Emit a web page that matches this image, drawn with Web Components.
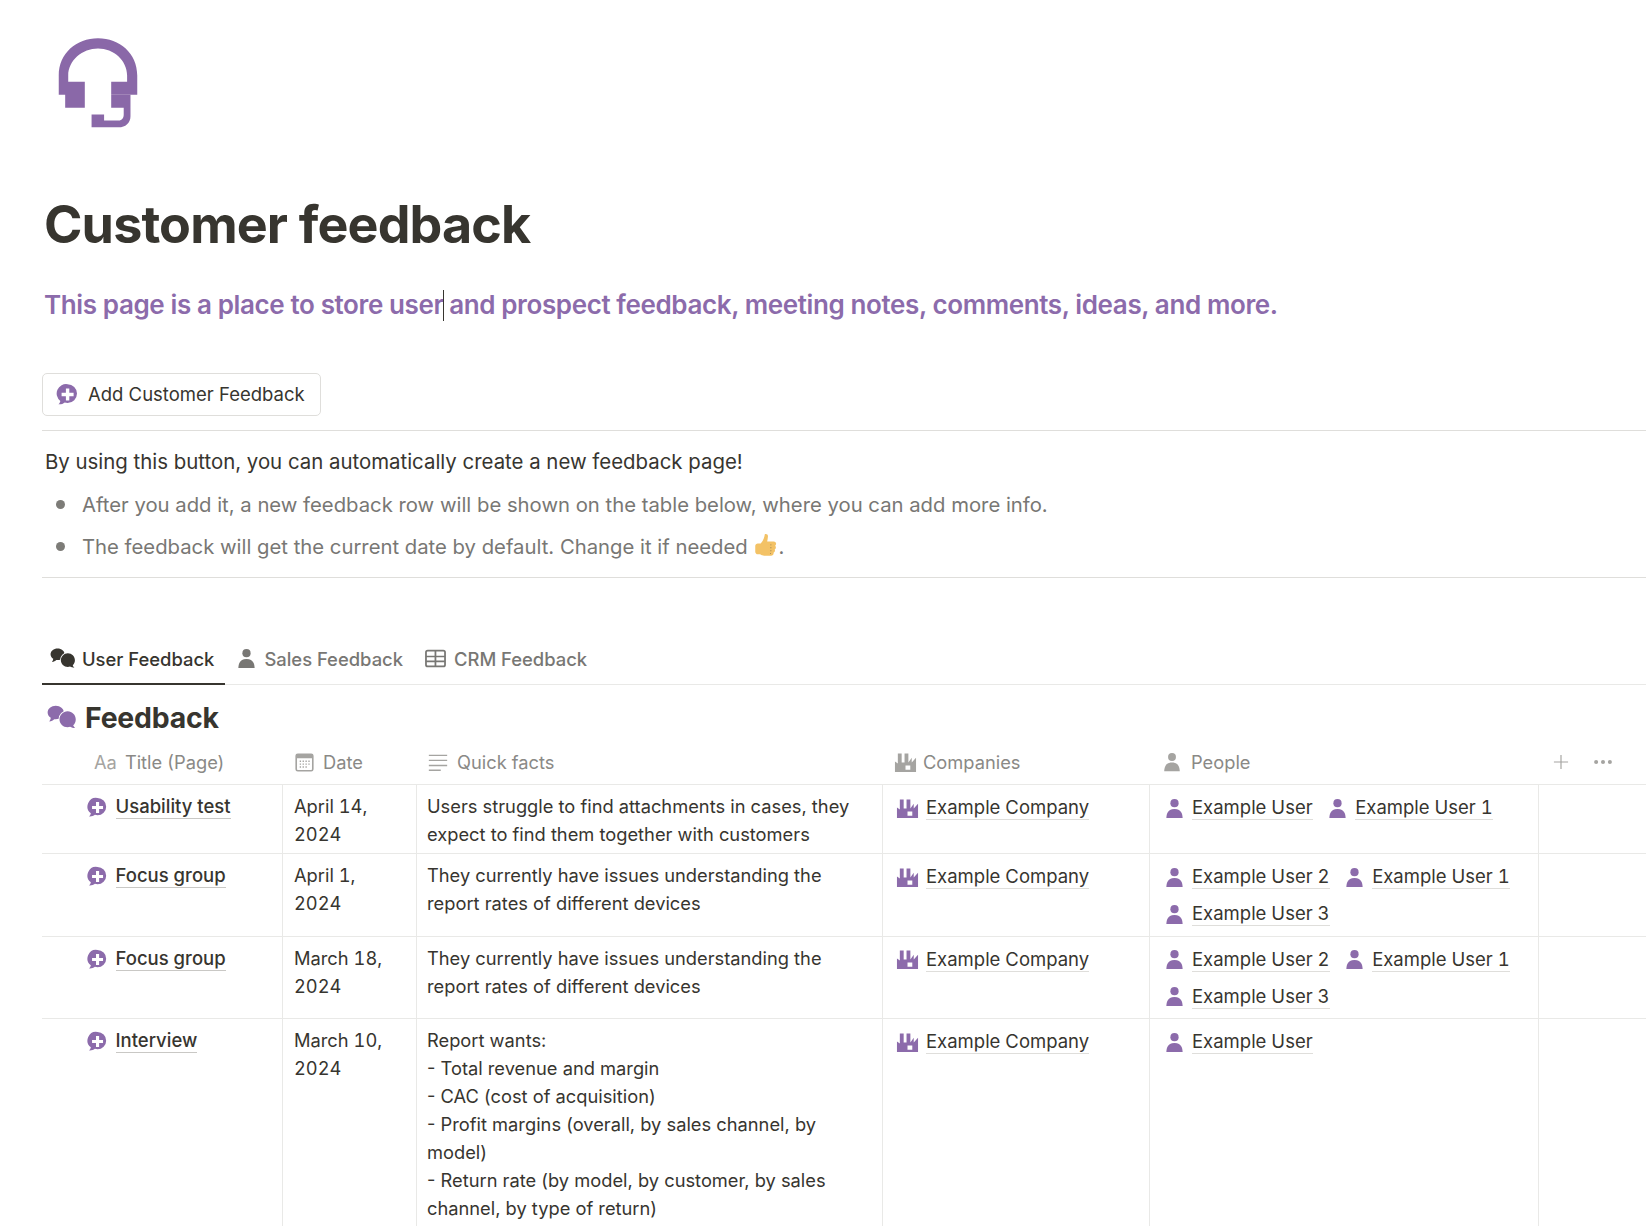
<!DOCTYPE html>
<html>
<head>
<meta charset="utf-8">
<title>Customer feedback</title>
<style>
    html, body { margin: 0; height: 100%; overflow: hidden; background: #fff; }
    body { font-family: 'Inter', 'Liberation Sans', sans-serif; color: #37352f; }
</style>
</head>
<body>
<fb-page>
    <fb-header slot="header">
        <span slot="title">Customer feedback</span>
        <span slot="lead">This page is a place to store user<fb-caret></fb-caret> and prospect feedback, meeting notes, comments, ideas, and more.</span>
    </fb-header>
    <fb-button slot="button" icon="chat-plus">Add Customer Feedback</fb-button>
    <fb-callout slot="callout">
        <span slot="intro">By using this button, you can automatically create a new feedback page!</span>
        <fb-bullet>After you add it, a new feedback row will be shown on the table below, where you can add more info.</fb-bullet>
        <fb-bullet>The feedback will get the current date by default. Change it if needed <fb-icon name="thumb" size="27" style="vertical-align:-5px;margin-right:-2px"></fb-icon>.</fb-bullet>
    </fb-callout>
    <fb-tabs slot="tabs">
        <fb-tab icon="chats" active>User Feedback</fb-tab>
        <fb-tab icon="person">Sales Feedback</fb-tab>
        <fb-tab icon="table">CRM Feedback</fb-tab>
    </fb-tabs>
    <fb-table slot="table" heading="Feedback">
        <fb-row head>
            <fb-th icon="aa" pad="52" gap="7">Title (Page)</fb-th>
            <fb-th icon="calendar" pad="10" gap="7">Date</fb-th>
            <fb-th icon="lines" pad="10" gap="8">Quick facts</fb-th>
            <fb-th icon="factory" pad="11" gap="6">Companies</fb-th>
            <fb-th icon="person" pad="11" gap="8">People</fb-th>
            <fb-th-actions></fb-th-actions>
        </fb-row>
        <fb-row>
            <fb-cell kind="title"><fb-link icon="chat-plus" title-link>Usability test</fb-link></fb-cell>
            <fb-cell kind="date">April 14, 2024</fb-cell>
            <fb-cell kind="text">Users struggle to find attachments in cases, they expect to find them together with customers</fb-cell>
            <fb-cell kind="rel"><fb-link icon="factory">Example Company</fb-link></fb-cell>
            <fb-cell kind="rel"><fb-link icon="person">Example User</fb-link><fb-link icon="person">Example User 1</fb-link></fb-cell>
            <fb-cell kind="blank"></fb-cell>
        </fb-row>
        <fb-row>
            <fb-cell kind="title"><fb-link icon="chat-plus" title-link>Focus group</fb-link></fb-cell>
            <fb-cell kind="date">April 1, 2024</fb-cell>
            <fb-cell kind="text">They currently have issues understanding the report rates of different devices</fb-cell>
            <fb-cell kind="rel"><fb-link icon="factory">Example Company</fb-link></fb-cell>
            <fb-cell kind="rel"><fb-link icon="person">Example User 2</fb-link><fb-link icon="person">Example User 1</fb-link><fb-link icon="person">Example User 3</fb-link></fb-cell>
            <fb-cell kind="blank"></fb-cell>
        </fb-row>
        <fb-row>
            <fb-cell kind="title"><fb-link icon="chat-plus" title-link>Focus group</fb-link></fb-cell>
            <fb-cell kind="date">March 18, 2024</fb-cell>
            <fb-cell kind="text">They currently have issues understanding the report rates of different devices</fb-cell>
            <fb-cell kind="rel"><fb-link icon="factory">Example Company</fb-link></fb-cell>
            <fb-cell kind="rel"><fb-link icon="person">Example User 2</fb-link><fb-link icon="person">Example User 1</fb-link><fb-link icon="person">Example User 3</fb-link></fb-cell>
            <fb-cell kind="blank"></fb-cell>
        </fb-row>
        <fb-row>
            <fb-cell kind="title"><fb-link icon="chat-plus" title-link>Interview</fb-link></fb-cell>
            <fb-cell kind="date">March 10, 2024</fb-cell>
            <fb-cell kind="text">Report wants:<br>- Total revenue and margin<br>- CAC (cost of acquisition)<br>- Profit margins (overall, by sales channel, by model)<br>- Return rate (by model, by customer, by sales channel, by type of return)</fb-cell>
            <fb-cell kind="rel"><fb-link icon="factory">Example Company</fb-link></fb-cell>
            <fb-cell kind="rel"><fb-link icon="person">Example User</fb-link></fb-cell>
            <fb-cell kind="blank"></fb-cell>
        </fb-row>
    </fb-table>
</fb-page>

<script>
// icon paths, all drawn on a 24 box except the headset
const ICONS = {
    'chat-plus': `<path fill-rule="evenodd" d="M12.600 2.200a9.400 9.400 0 0 1 0 18.800c-1 0-2-.2-2.900-.5-1.600 1.400-3.800 2-6.300 1.800 1.100-1 1.700-2.100 1.900-3.400A9.400 9.400 0 0 1 12.600 2.200zM10.900 6.500v4.300H6.600v3.400h4.300v4.300h3.400v-4.300h4.300v-3.400h-4.300V6.500z"/>`,
    'chats': `<path d="M7 2.200c3.600 0 6.500 2.400 6.500 5.400 0 3-2.900 5.400-6.500 5.400-.4 0-.8 0-1.200-.1-.9 1-2.200 1.700-4 1.800.7-.8 1.100-1.700 1.200-2.900C1.400 10.800.5 9.300.5 7.600c0-3 2.900-5.400 6.500-5.400z"/><path stroke="#fff" stroke-width="1.600" paint-order="stroke" d="M16.500 6.600c3.600 0 6.500 2.900 6.500 6.500 0 1.900-.8 3.500-2 4.700.2.700.6 1.400 1.500 2.200-1.500 0-2.900-.3-4-1-.6.200-1.300.3-2 .3-3.600 0-6.500-2.800-6.500-6.200s2.900-6.500 6.500-6.500z"/>`,
    'person': `<circle cx="12" cy="6.500" r="4.300"/><path d="M12 12.600c-3.900 0-6.100 1.500-7.300 3.900-.7 1.400-1.100 3.300-1.200 5.500h17c-.1-2.200-.5-4.100-1.200-5.500-1.200-2.400-3.400-3.900-7.300-3.900z"/>`,
    'table': `<path fill-rule="evenodd" d="M4.500 3.500h15A2.500 2.500 0 0 1 22 6v12a2.500 2.500 0 0 1-2.500 2.500h-15A2.500 2.500 0 0 1 2 18V6a2.500 2.500 0 0 1 2.500-2.500zM3.700 9.300h7.400V5.200H4.500a.8.800 0 0 0-.8.800zm9.100 0h7.500V6a.8.800 0 0 0-.8-.8h-6.700zm-9.100 1.600v3h7.400v-3zm9.100 0v3h7.500v-3zm-9.100 4.600V18c0 .4.400.8.800.8h6.600v-3.300zm9.100 0v3.300h6.700c.4 0 .8-.4.800-.8v-2.500z"/>`,
    'factory': `<path fill-rule="evenodd" d="M1 22V11l3 2V2.500h4V12h3V2.500h4V12l3.500-5v5L23 7v15zM12 15v4.500h5V15z"/>`,
    'calendar': `<path fill-rule="evenodd" d="M5 2.500h14A2.500 2.500 0 0 1 21.500 5v14a2.500 2.500 0 0 1-2.500 2.500H5A2.500 2.500 0 0 1 2.500 19V5A2.500 2.500 0 0 1 5 2.500zM4.200 7.500V19c0 .5.400.8.800.8h14c.4 0 .8-.3.800-.8V7.500z"/><path d="M7 10h1.400v1.400H7zm3 0h1.400v1.400H10zm3 0h1.400v1.400H13zm3 0h1.400v1.400H16zM7 13h1.400v1.400H7zm3 0h1.400v1.400H10zm3 0h1.400v1.400H13zm3 0h1.400v1.400H16zM7 16h1.400v1.400H7zm3 0h1.400v1.400H10zm3 0h1.400v1.400H13z"/>`,
    'lines': `<path d="M2 4h20v1.500H2zM2 9.500h20v1.500H2zM2 15h20v1.500H2zM2 20.300h13v1.500H2z"/>`,
    'plus': `<path d="M11.300 3.500h1.400v7.800h7.800v1.400h-7.800v7.800h-1.400v-7.800H3.500v-1.400h7.800z"/>`,
    'dots': `<circle cx="4.500" cy="12" r="2.200"/><circle cx="12" cy="12" r="2.200"/><circle cx="19.500" cy="12" r="2.200"/>`,
    'thumb': `<path fill="#f3c266" d="M10.500 2c1.500-.6 2.900.3 2.800 2-.1 1.700-.5 3.200-.7 4.500h5.800c2.300 0 2.800 2.700 1.300 3.700 1 1 .8 2.700-.4 3.300.6 1.100.1 2.500-1 2.900.3 1.500-.7 2.600-2.300 2.600h-6c-1.500 0-2.700-.4-3.700-1.200H4.300C3 19.800 2 18.800 2 17.500v-5c0-1.300 1-2.300 2.300-2.300h2.500C8.700 8.500 10 5.500 10.500 2z"/><path fill="#8a7a55" d="M15.500 11h.8v.8h-.8zm0 2.600h.8v.8h-.8zm0 2.600h.8v.8h-.8zm-.3 2.600h.8v.8h-.8z"/>`
};

class FbIcon extends HTMLElement {
    connectedCallback() {
        const shadow = this.shadowRoot || this.attachShadow({ mode: 'open' });
        const size = this.getAttribute('size') || 20;
        shadow.innerHTML = `
            <style>
                :host { display: inline-flex; flex: none; line-height: 0; color: var(--icon-color, #8c6bab); }
                svg { display: block; fill: currentColor; }
            </style>
            <svg width="${size}" height="${size}" viewBox="0 0 24 24">${ICONS[this.getAttribute('name')] || ''}</svg>
        `;
    }
}

class FbCaret extends HTMLElement {
    constructor() {
        super();
        this.attachShadow({ mode: 'open' }).innerHTML = `
            <style>
                :host { display: inline-block; width: 0; height: 31px; border-left: 1.5px solid #37352f; margin-right: -1.5px; vertical-align: -7px; }
            </style>
        `;
    }
}

class FbPage extends HTMLElement {
    constructor() {
        super();
        this.attachShadow({ mode: 'open' }).innerHTML = `
            <style>
                :host { display: block; padding: 38px 0 0 42px; }
                .button { display: block; margin-top: 50px; }
                .tabs { display: block; margin-top: 56px; }
            </style>
            <slot name="header"></slot>
            <div class="button"><slot name="button"></slot></div>
            <slot name="callout"></slot>
            <div class="tabs"><slot name="tabs"></slot></div>
            <slot name="table"></slot>
        `;
    }
}

class FbHeader extends HTMLElement {
    constructor() {
        super();
        this.attachShadow({ mode: 'open' }).innerHTML = `
            <style>
                :host { display: block; padding-left: 3px; }
                svg { display: block; margin-left: 12px; }
                h1 { margin: 63px 0 0 -1px; font-size: 52px; line-height: 68px; font-weight: 700; letter-spacing: -0.85px; color: #37352f; }
                p { margin: 28px 0 0 -1px; font-size: 26px; line-height: 36px; font-weight: 600; letter-spacing: -0.38px; color: #8c6bab; white-space: nowrap; }
            </style>
            <svg width="82" height="90" viewBox="86 54 236 266" fill="#8a68a8">
                <path d="M88 222V165C88 100 140 55 204 55S320 100 320 165V222H243V183H290V165C290 120 250 85 204 85S116 120 116 165V183H165V260H107V222Z"/>
                <path d="M243 222H300V285C300 305 285 318 265 318H185V280H222V298H265C275 298 280 290 280 280V260H243Z"/>
            </svg>
            <h1><slot name="title"></slot></h1>
            <p><slot name="lead"></slot></p>
        `;
    }
}

class FbButton extends HTMLElement {
    connectedCallback() {
        if (this.shadowRoot) return;
        this.attachShadow({ mode: 'open' }).innerHTML = `
            <style>
                :host { display: inline-flex; align-items: center; gap: 9px; height: 43px; box-sizing: border-box; padding: 0 15px 1px 12px; border: 1px solid #dfdedb; border-radius: 5px; font-size: 18.500px; font-weight: 400; color: #37352f; }
            </style>
            <fb-icon name="${this.getAttribute('icon')}" size="24"></fb-icon>
            <slot></slot>
        `;
    }
}

class FbCallout extends HTMLElement {
    constructor() {
        super();
        this.attachShadow({ mode: 'open' }).innerHTML = `
            <style>
                :host { display: block; margin-top: 14px; padding: 16px 0 15px 3px; border-top: 1px solid #dfdedb; border-bottom: 1px solid #dfdedb; }
                .intro { font-size: 20.400px; line-height: 30px; color: #37352f; }
                .list { display: flex; flex-direction: column; gap: 12px; margin-top: 13px; }
            </style>
            <div class="intro"><slot name="intro"></slot></div>
            <div class="list"><slot></slot></div>
        `;
    }
}

class FbBullet extends HTMLElement {
    constructor() {
        super();
        this.attachShadow({ mode: 'open' }).innerHTML = `
            <style>
                :host { display: flex; font-size: 20.300px; line-height: 30px; color: #787774; }
                i { flex: none; width: 9px; height: 9px; margin: 10px 17px 0 11px; border-radius: 50%; background: #7d7c78; }
            </style>
            <i></i><span><slot></slot></span>
        `;
    }
}

class FbTabs extends HTMLElement {
    constructor() {
        super();
        this.attachShadow({ mode: 'open' }).innerHTML = `
            <style>
                :host { display: flex; gap: 0; height: 51px; box-sizing: border-box; border-bottom: 1px solid #e9e9e7; }
            </style>
            <slot></slot>
        `;
    }
}

class FbTab extends HTMLElement {
    connectedCallback() {
        if (this.shadowRoot) return;
        const active = this.hasAttribute('active');
        const name = this.getAttribute('icon');
        const size = name === 'chats' ? 26 : name === 'table' ? 25 : 23;
        this.attachShadow({ mode: 'open' }).innerHTML = `
            <style>
                :host { display: flex; align-items: center; gap: 6px; box-sizing: border-box; height: 51px; padding: 0 11px 0 10px; font-size: 18.400px; font-weight: 500; color: ${active ? '#37352f' : '#787774'}; border-bottom: 2px solid ${active ? '#37352f' : 'transparent'}; --icon-color: ${active ? '#37352f' : '#787774'}; }
                :host(:first-child) { padding-left: 8px; }
                :host(:last-child) { padding-left: 9px; }
            </style>
            <fb-icon name="${name}" size="${size}"></fb-icon>
            <slot></slot>
        `;
    }
}

class FbTable extends HTMLElement {
    connectedCallback() {
        if (this.shadowRoot) return;
        this.attachShadow({ mode: 'open' }).innerHTML = `
            <style>
                :host { display: block; --cols: 241px 134px 466px 267px 389px 107px; }
                h2 { display: flex; align-items: center; gap: 8px; margin: 0; padding: 14px 0 3px 5px; font-size: 28.400px; line-height: 38px; font-weight: 700; letter-spacing: -0.2px; color: #37352f; }
            </style>
            <h2><fb-icon name="chats" size="30"></fb-icon>${this.getAttribute('heading')}</h2>
            <slot></slot>
        `;
    }
}

class FbRow extends HTMLElement {
    constructor() {
        super();
        this.attachShadow({ mode: 'open' }).innerHTML = `
            <style>
                :host { display: grid; grid-template-columns: var(--cols); border-bottom: 1px solid #e9e9e7; }
                :host([head]) { height: 44px; align-items: center; }
            </style>
            <slot></slot>
        `;
    }
}

class FbTh extends HTMLElement {
    connectedCallback() {
        if (this.shadowRoot) return;
        const name = this.getAttribute('icon');
        const sizes = { factory: 23, calendar: 23, lines: 22, person: 22 };
        const lead = name === 'aa'
            ? '<span class="aa">Aa</span>'
            : `<fb-icon name="${name}" size="${sizes[name] || 20}"></fb-icon>`;
        this.attachShadow({ mode: 'open' }).innerHTML = `
            <style>
                :host { display: flex; align-items: center; gap: ${this.getAttribute('gap')}px; padding-left: ${this.getAttribute('pad')}px; font-size: 18.300px; color: #8a8986; --icon-color: #a5a4a1; }
                .aa { color: #a5a4a1; margin-right: 1px; }
            </style>
            ${lead}<slot></slot>
        `;
    }
}

class FbThActions extends HTMLElement {
    connectedCallback() {
        if (this.shadowRoot) return;
        this.attachShadow({ mode: 'open' }).innerHTML = `
            <style>
                :host { display: flex; align-items: center; gap: 21px; padding-left: 12px; --icon-color: #a5a4a1; }
            </style>
            <fb-icon name="plus" size="20"></fb-icon>
            <fb-icon name="dots" size="22"></fb-icon>
        `;
    }
}

class FbCell extends HTMLElement {
    constructor() {
        super();
        this.attachShadow({ mode: 'open' }).innerHTML = `
            <style>
                :host { display: block; box-sizing: border-box; min-width: 0; border-right: 1px solid #e9e9e7; font-size: 18.300px; line-height: 28px; color: #37352f; }
                :host([kind="title"]) { padding: 8px 10px 5px 44px; }
                :host([kind="text"]) { padding: 7px 10px 5px 10px; }
                :host([kind="date"]) { padding: 7px 22px 5px 11px; font-variant-numeric: tabular-nums; }
                :host([kind="rel"]) { display: flex; flex-wrap: wrap; align-content: flex-start; column-gap: 13.500px; row-gap: 9px; padding: 9px 8px 7.500px 13px; font-variant-numeric: tabular-nums; }
                :host([kind="blank"]) { border-right: 0; }
            </style>
            <slot></slot>
        `;
    }
}

class FbLink extends HTMLElement {
    connectedCallback() {
        if (this.shadowRoot) return;
        const name = this.getAttribute('icon');
        const bold = this.hasAttribute('title-link');
        const sizes = { factory: 23, person: 23, 'chat-plus': 22 };
        this.attachShadow({ mode: 'open' }).innerHTML = `
            <style>
                :host { display: inline-flex; align-items: center; gap: ${bold ? 7.5 : 6}px; height: 28px; font-size: 18.500px; font-weight: ${bold ? 500 : 400}; }
                :host([icon="factory"]) { gap: 7px; }
                span { line-height: 23px; border-bottom: 1px solid ${bold ? '#c9c8c5' : '#dfdedb'}; }
            </style>
            <fb-icon name="${name}" size="${sizes[name]}"></fb-icon>
            <span><slot></slot></span>
        `;
    }
}

customElements.define('fb-icon', FbIcon);
customElements.define('fb-caret', FbCaret);
customElements.define('fb-page', FbPage);
customElements.define('fb-header', FbHeader);
customElements.define('fb-button', FbButton);
customElements.define('fb-callout', FbCallout);
customElements.define('fb-bullet', FbBullet);
customElements.define('fb-tabs', FbTabs);
customElements.define('fb-tab', FbTab);
customElements.define('fb-table', FbTable);
customElements.define('fb-row', FbRow);
customElements.define('fb-th', FbTh);
customElements.define('fb-th-actions', FbThActions);
customElements.define('fb-cell', FbCell);
customElements.define('fb-link', FbLink);
</script>
</body>
</html>
